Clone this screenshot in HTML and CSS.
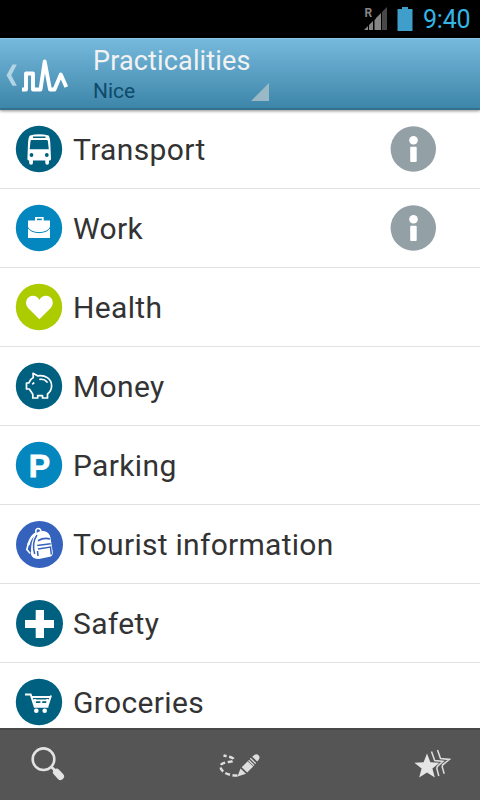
FILE: index.html
```
<!DOCTYPE html>
<html lang="en">
<head>
<meta charset="utf-8">
<title>Practicalities</title>
<link rel="stylesheet" href="styles.css">
</head>
<body>
<div class="screen">
  <div class="status">
    <svg class="signal" width="24" height="24" viewBox="0 0 24 24">
      <text class="roam" x="0.5" y="9.7">R</text>
      <path fill="#858585" d="M0 23l4-4v4zM5 18l4-4v9H5zM10.500 13l4-4v14h-4zM12 11l5-5v17h-5z"/>
      <path fill="#484848" d="M18 5l5-5v23h-5z"/>
    </svg>
    <svg class="battery" width="16" height="24" viewBox="0 0 16 24"><path fill="#3f9fca" d="M5 0h6v2h4.500v22H.5V2H5z"/></svg>
    <span class="clock">9:40</span>
  </div>
  <header class="bar">
    <svg class="logo" width="70" height="70" viewBox="0 0 70 70">
      <path fill="#b3d4e5" d="M12.500 25.500h4.300L11.300 36.200l5.500 10.600h-4.300L6.500 36.200z"/>
      <path fill="none" stroke="#fff" stroke-width="3.900" stroke-linejoin="round" d="M22 50.500h4V34.500h7V50.500h7.500L44.700 22.500 50 50.500h4.500l6.300-15 5.500 12.500"/>
    </svg>
    <div class="spinner">
      <h1 class="title">Practicalities</h1>
      <div class="city">Nice</div>
      <span class="corner"></span>
    </div>
  </header>
  <main class="list">
    <div class="row">
      <svg class="icon" viewBox="0 0 46 46"><circle cx="23" cy="23" r="23.200" fill="#006080"/>
        <path fill="#fff" d="M14 9.500Q23 7 32.500 9.500Q34 11 34.300 17L35 33q0 1.500-1.500 1.500H33v2.500q0 1.700-1.800 1.700T29.300 37v-2.500H17V37q0 1.700-1.900 1.700T13.200 37v-2.500q-1.800 0-1.800-1.500L12 17q.3-6 2-7.500z"/>
        <path fill="#006080" d="M17 10.600h12.500v1.500H17zM15.700 14h15q1 0 1.200 1.200l.9 8.100H13.700l.8-8.100q.2-1.200 1.200-1.200z"/>
        <circle cx="15.500" cy="29" r="1.900" fill="#006080"/><circle cx="30.800" cy="29" r="1.900" fill="#006080"/></svg>
      <span class="label">Transport</span>
      <svg class="info" viewBox="0 0 46 46"><circle cx="23.300" cy="23" r="22.700" fill="#93a1a7"/><circle cx="23.500" cy="14.200" r="4.300" fill="#fff"/><rect x="20.200" y="20.700" width="6.500" height="15.300" rx="1" fill="#fff"/></svg>
    </div>
    <div class="row">
      <svg class="icon" viewBox="0 0 46 46"><circle cx="23" cy="23" r="23.200" fill="#0486bf"/>
        <path fill="#fff" d="M12 15.600h7V12h8.700v3.600H34V33H12z"/><path fill="#0486bf" d="M21 13.600h4.800v1.600H21z"/>
        <path fill="none" stroke="#0486bf" stroke-width="1" d="M11.500 22c3 7.500 20 7.500 23 0"/></svg>
      <span class="label">Work</span>
      <svg class="info" viewBox="0 0 46 46"><circle cx="23.300" cy="23" r="22.700" fill="#93a1a7"/><circle cx="23.500" cy="14.200" r="4.300" fill="#fff"/><rect x="20.200" y="20.700" width="6.500" height="15.300" rx="1" fill="#fff"/></svg>
    </div>
    <div class="row">
      <svg class="icon" viewBox="0 0 46 46"><circle cx="23" cy="23" r="23.200" fill="#accc00"/>
        <path fill="#fff" d="M23.400 35.300L12.300 24.200C9 20.500 9.500 15.300 13 12.900c3.500-2.300 8.200-1.300 10.400 3 2.200-4.300 7-5.300 10.500-3 3.500 2.400 4 7.600.6 11.300z"/></svg>
      <span class="label">Health</span>
    </div>
    <div class="row">
      <svg class="icon" viewBox="0 0 46 46"><circle cx="23" cy="23" r="23.200" fill="#006080"/>
        <g fill="none" stroke="#fff" stroke-width="1.700" stroke-linejoin="round" stroke-linecap="round">
        <path d="M17 10.300l4.500 2.500C29 11.600 35.600 15.500 35.600 23c0 3.500-1.600 6-4.100 8v4h-5v-2.300h-4.800V35h-4.900v-3.700l-3.500-5.300h-2.800v-6h2.300c.8-2.500 2-4.300 4.500-5.600z"/>
        <path d="M24 16.300c3-.3 5.300.6 7 2.700"/><path d="M16.700 20.800l1-.8"/></g></svg>
      <span class="label">Money</span>
    </div>
    <div class="row">
      <svg class="icon" viewBox="0 0 46 46"><circle cx="23" cy="23" r="23.200" fill="#0486bf"/>
        <text class="parking" x="12.700" y="34.600">P</text></svg>
      <span class="label">Parking</span>
    </div>
    <div class="row">
      <svg class="icon wide" viewBox="0 0 47 47"><circle cx="23.500" cy="23.500" r="23.500" fill="#3562bd"/>
        <path fill="#fff" d="M19.500 12.500Q26 8.500 31 11.200q3.500 2 3.900 8.300l1.900 11.500q.3 4-3 4.700L23 38q-6.500 0-8-4.500-.6-13 4.500-21z"/>
        <g fill="none" stroke="#fff" stroke-linecap="round"><path stroke-width="1.600" d="M20 12q-.8-4 1.800-4.500 2.700-.3 3.200 3"/><path stroke-width="2.300" d="M19 13q-4.500 3-6.500 10.500"/><path stroke-width="1.600" d="M12.500 22l-1.700 6.500 3 3.500"/></g>
        <g fill="none" stroke="#3562bd" stroke-width="1.500"><path d="M21 14q-5.500 8-2.300 19"/><path stroke-width="1.800" d="M22 19.800q6-3.500 12-1.800"/><path d="M21.200 24.500l13.500-1.800M22 28l12.500-2 .8 7.500M21.500 30l.5 5"/></g></svg>
      <span class="label tourist">Tourist information</span>
    </div>
    <div class="row">
      <svg class="icon wide" viewBox="0 0 47 47"><circle cx="23.500" cy="23.500" r="23.500" fill="#006080"/><path fill="#fff" d="M19.700 10H28v10h10v8H28v10h-8.300V28H9v-8h10.700z"/></svg>
      <span class="label">Safety</span>
    </div>
    <div class="row">
      <svg class="icon" viewBox="0 0 46 46"><circle cx="23" cy="23" r="23.200" fill="#006080"/>
        <path fill="none" stroke="#fff" stroke-width="1.900" d="M9 15.500h5.700l4 12.300h13.700M16 18h18.500l-2.600 8H18.500M34.300 18.500l.8-2"/>
        <path fill="none" stroke="#fff" stroke-width="1.800" d="M17 21.400h16M19 24.800h13M19 20v6M25.300 21v4M31.200 20v6"/>
        <circle cx="20.300" cy="31.700" r="2.300" fill="#fff"/><circle cx="28.700" cy="31.700" r="2.300" fill="#fff"/></svg>
      <span class="label">Groceries</span>
    </div>
  </main>
  <footer class="tools">
    <svg width="60" height="60" viewBox="0 0 60 60"><circle cx="23.500" cy="24.200" r="10.800" fill="none" stroke="#e3e3e3" stroke-width="2.600"/><path stroke="#e3e3e3" stroke-width="2.600" d="M31 31.500l4 4"/><path stroke="#e3e3e3" stroke-width="7" stroke-linecap="round" d="M36.500 37.200l4 4.300"/></svg>
    <svg class="draw" width="60" height="60" viewBox="0 0 60 60"><path fill="none" stroke="#dedede" stroke-width="2.500" stroke-dasharray="5 2.500" d="M28.500 40.500C20 41 11.500 37 11.500 31.500S24 28 24.500 25 20 22 14.500 20.500"/>
      <path fill="#dedede" d="M28.500 41.500l3-8 5.500 5.200zM32.700 32.300l6-6 5.500 5.300-6 6zM45 20.200q2.500-2 4.500 0t.2 4.500l-1.500 1.700-5-4.700z"/><path stroke="#dedede" stroke-width="1.300" d="M39.600 25.300l5.400 5.200M41.300 23.300l5.400 5.200"/></svg>
    <svg width="60" height="60" viewBox="0 0 60 60"><path fill="#e5e5e5" d="M22 18.500l3.400 8.700 9 .5-7 5.800 2.400 9-7.800-5-7.800 5 2.400-9-7.200-5.800 9.200-.5z"/><path fill="none" stroke="#dedede" stroke-width="1.500" d="M26.500 16.500l3.200 9 8.300.9-5.700 5.100-.5 2 2 7.500M32.500 15l3 8.500 9 .9-6.800 5.400-.5 2 2 7"/></svg>
  </footer>
</div>
</body>
</html>
```
FILE: styles.css
```
* { box-sizing: border-box; }
body { margin: 0; font-family: Roboto, "Liberation Sans", sans-serif; }
.screen { width: 480px; height: 800px; display: flex; flex-direction: column; overflow: hidden; background: #fff; }
.status { height: 38px; flex: none; background: #000; display: flex; justify-content: flex-end; align-items: flex-start; padding: 7px 10px 0 0; }
.signal { margin-right: 9px; }
.battery { margin-right: 10px; }
.roam { font: bold 12px Roboto, sans-serif; fill: #858585; }
.clock { width: 47px; color: #33b5e5; font-size: 25px; line-height: 26px; letter-spacing: -0.2px; white-space: nowrap; }
.bar { height: 72px; flex: none; position: relative; z-index: 1; display: flex; background: linear-gradient(#76b9dd, #3d86a9); border-top: 1px solid #8ac4e4; border-bottom: 2px solid #33718f; box-shadow: 0 1px 3px rgba(0, 0, 0, .45); }
.logo { flex: none; }
.spinner { position: relative; width: 200px; padding: 6px 0 0 23px; }
.title { margin: 0; font-size: 27px; line-height: 32px; font-weight: 400; letter-spacing: 0.15px; color: #f2f2f2; white-space: nowrap; }
.city { font-size: 21px; line-height: 24px; margin-top: 2px; letter-spacing: 0; color: #0f4a6b; }
.corner { position: absolute; left: 181px; top: 44px; width: 18px; height: 18px; background: #9ab9c7; clip-path: polygon(100% 0, 100% 100%, 0 100%); }
.list { flex: 1; min-height: 0; overflow: hidden; }
.row { height: 79px; display: flex; align-items: center; padding: 0 44px 0 16px; border-bottom: 1px solid #e1e1e1; }
.icon { flex: none; width: 46px; height: 46px; margin-right: 11px; overflow: visible; }
.icon.wide { width: 47px; height: 47px; margin-right: 10px; }
.label { flex: 1; padding-top: 2px; font-size: 30px; line-height: 40px; letter-spacing: 0.35px; color: #333; white-space: nowrap; }
.tourist { letter-spacing: 0.28px; }
.info { flex: none; width: 46px; height: 46px; }
.parking { font: bold 32px "Liberation Sans", sans-serif; fill: #fff; stroke: #fff; stroke-width: 0.8px; }
.tools { height: 72px; flex: none; display: flex; justify-content: space-between; align-items: flex-start; background: #555; border-top: 2px solid #484848; padding: 5px 15px 0 20px; }
.draw { margin-right: 7px; }
```
